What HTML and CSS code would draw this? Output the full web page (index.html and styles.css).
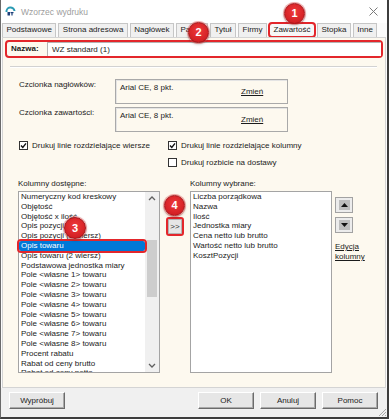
FILE: index.html
```html
<!DOCTYPE html>
<html lang="pl">
<head>
    <meta charset="UTF-8">
    <title>Wzorzec wydruku</title>
    <link rel="stylesheet" href="styles.css">
</head>
<body>
    <div class="window">
        <div class="titlebar">
            <svg class="app-icon" width="11" height="11" viewBox="0 0 11 11">
                <path d="M1.5 6 A4 4 0 0 1 9.5 5" fill="none" stroke="#2b9bb3" stroke-width="2"/>
                <rect x="2.5" y="6" width="2.5" height="3.5" fill="#1d3f7a"/>
                <rect x="5.5" y="6" width="3" height="1.2" fill="#1d3f7a"/>
                <rect x="6.4" y="6" width="1.2" height="3.5" fill="#1d3f7a"/>
            </svg>
            <span class="title">Wzorzec wydruku</span>
            <svg class="close" width="9" height="9" viewBox="0 0 9 9">
                <path d="M0.5 0.5 L8.5 8.5 M8.5 0.5 L0.5 8.5" stroke="#7a7a7a" stroke-width="1"/>
            </svg>
        </div>

        <div class="tabs">
            <span class="tab">Podstawowe</span>
            <span class="tab">Strona adresowa</span>
            <span class="tab">Nagłówek</span>
            <span class="tab">Papier</span>
            <span class="tab">Tytuł</span>
            <span class="tab">Firmy</span>
            <span class="tab active">Zawartość</span>
            <span class="tab">Stopka</span>
            <span class="tab">Inne</span>
        </div>

        <div class="page">
            <div class="name-row">
                <span class="name-label">Nazwa:</span>
                <div class="name-input">WZ standard (1)</div>
            </div>
            <div class="sep"></div>

            <div class="font-row">
                <span class="font-label">Czcionka nagłówków:</span>
                <div class="font-box">
                    <span class="font-name">Arial CE, 8 pkt.</span>
                    <a class="link change">Zmień</a>
                </div>
            </div>
            <div class="font-row second">
                <span class="font-label">Czcionka zawartości:</span>
                <div class="font-box">
                    <span class="font-name">Arial CE, 8 pkt.</span>
                    <a class="link change">Zmień</a>
                </div>
            </div>

            <div class="checks">
                <label class="check"><span class="box checked"><svg width="7" height="7" viewBox="0 0 7 7"><path d="M1 3.5 L2.8 5.4 L6 1.4" fill="none" stroke="#111" stroke-width="1.4"/></svg></span>Drukuj linie rozdzielające wiersze</label>
                <label class="check"><span class="box checked"><svg width="7" height="7" viewBox="0 0 7 7"><path d="M1 3.5 L2.8 5.4 L6 1.4" fill="none" stroke="#111" stroke-width="1.4"/></svg></span>Drukuj linie rozdzielające kolumny</label>
                <span></span>
                <label class="check"><span class="box"></span>Drukuj rozbicie na dostawy</label>
            </div>

            <div class="lists">
                <span class="list-label">Kolumny dostępne:</span>
                <span></span>
                <span class="list-label">Kolumny wybrane:</span>
                <span></span>

                <div class="list avail">
                    <div class="items">
                        <div class="item">Numeryczny kod kreskowy</div>
                        <div class="item">Objętość</div>
                        <div class="item">Objętość x ilość</div>
                        <div class="item">Opis pozycji</div>
                        <div class="item">Opis pozycji (2 wiersz)</div>
                        <div class="item selected">Opis towaru</div>
                        <div class="item">Opis towaru (2 wiersz)</div>
                        <div class="item">Podstawowa jednostka miary</div>
                        <div class="item">Pole &lt;własne 1&gt; towaru</div>
                        <div class="item">Pole &lt;własne 2&gt; towaru</div>
                        <div class="item">Pole &lt;własne 3&gt; towaru</div>
                        <div class="item">Pole &lt;własne 4&gt; towaru</div>
                        <div class="item">Pole &lt;własne 5&gt; towaru</div>
                        <div class="item">Pole &lt;własne 6&gt; towaru</div>
                        <div class="item">Pole &lt;własne 7&gt; towaru</div>
                        <div class="item">Pole &lt;własne 8&gt; towaru</div>
                        <div class="item">Procent rabatu</div>
                        <div class="item">Rabat od ceny brutto</div>
                        <div class="item cut">Rabat od ceny netto</div>
                    </div>
                    <div class="scrollbar">
                        <svg class="sb-arrow" width="14" height="14" viewBox="0 0 14 14"><path d="M4 8 L7 5 L10 8" fill="none" stroke="#606060" stroke-width="1.3"/></svg>
                        <div class="thumb"></div>
                        <svg class="sb-arrow down" width="14" height="14" viewBox="0 0 14 14"><path d="M4 6 L7 9 L10 6" fill="none" stroke="#606060" stroke-width="1.3"/></svg>
                    </div>
                </div>

                <div class="middle">
                    <button class="add-btn">&gt;&gt;</button>
                </div>

                <div class="list chosen">
                    <div class="item">Liczba porządkowa</div>
                    <div class="item">Nazwa</div>
                    <div class="item">Ilość</div>
                    <div class="item">Jednostka miary</div>
                    <div class="item">Cena netto lub brutto</div>
                    <div class="item">Wartość netto lub brutto</div>
                    <div class="item">KosztPozycji</div>
                </div>

                <div class="side">
                    <button class="move-btn"><span class="move-face"><svg width="7" height="4" viewBox="0 0 7 4"><path d="M0 4 L3.5 0 L7 4 Z" fill="#111"/></svg></span></button>
                    <button class="move-btn down"><span class="move-face"><svg width="7" height="4" viewBox="0 0 7 4"><path d="M0 0 L3.5 4 L7 0 Z" fill="#111"/></svg></span></button>
                    <a class="link edit">Edycja<br>kolumny</a>
                </div>
            </div>
        </div>

        <div class="footer">
            <button class="btn">Wypróbuj</button>
            <button class="btn ok">OK</button>
            <button class="btn">Anuluj</button>
            <button class="btn">Pomoc</button>
            <svg class="grip" width="9" height="9" viewBox="0 0 9 9">
                <path d="M8 1 L1 8 M8 4 L4 8 M8 7 L7 8" stroke="#a8a8a8" stroke-width="1"/>
            </svg>
        </div>

        <span class="badge b1">1</span>
        <span class="badge b2">2</span>
        <span class="badge b3">3</span>
        <span class="badge b4">4</span>
    </div>
</body>
</html>
```

FILE: styles.css
```css
* {
    box-sizing: border-box;
}

body {
    margin: 0;
    font-family: "Liberation Sans", Arial, sans-serif;
    font-size: 8px;
    line-height: 10px;
    color: #1b1b1b;
    background: #ffffff;
}

.window {
    position: relative;
    width: 389px;
    height: 419px;
    background: #fbfbfb;
    border-left: 1px solid #6a6a6a;
    border-right: 2px solid #3d3d3d;
    border-bottom: 2px solid #3d3d3d;
    display: flex;
    flex-direction: column;
}

/* title bar */
.titlebar {
    height: 23px;
    flex: none;
    display: flex;
    align-items: center;
    background: #ffffff;
}

.app-icon {
    margin-left: 4px;
}

.title {
    margin-left: 5px;
    font-size: 8.5px;
    color: #9d9d9d;
}

.close {
    margin-left: auto;
    margin-right: 9px;
}

/* tabs */
.tabs {
    height: 14px;
    flex: none;
    display: flex;
    gap: 2px;
    padding-left: 1px;
}

.tab {
    height: 14px;
    padding: 0 3.5px;
    line-height: 12px;
    border: 1px solid #c6c6c6;
    border-bottom: none;
    background: #f0f0f0;
    white-space: nowrap;
}

.tab.active {
    outline: 2px solid #e3262b;
    outline-offset: -1px;
    border-radius: 3px;
    background: #f7f7f7;
}

/* page */
.page {
    height: 351px;
    flex: none;
    margin: 0 1px;
    border: 1px solid #d4d4d4;
    background: #fdf9ef;
}

.name-row {
    margin: 2px 2px 0 2px;
    height: 18px;
    border: 2px solid #e3262b;
    border-radius: 4px;
    display: flex;
    align-items: center;
    padding-left: 4px;
}

.name-label {
    font-weight: bold;
    width: 36px;
}

.name-input {
    flex: 1;
    height: 14px;
    background: #ffffff;
    border-left: 1px solid #b4b4b4;
    border-top: 1px solid #b4b4b4;
    padding-left: 4px;
    line-height: 13px;
}

.sep {
    margin: 8px 8px 0 7px;
    height: 2px;
    border-top: 1px solid #d2d2d2;
    border-bottom: 1px solid #ffffff;
}

.font-row {
    display: flex;
    margin: 11px 0 0 16px;
    height: 25px;
}

.font-row.second {
    margin-top: 3px;
}

.font-label {
    width: 96px;
    padding-top: 1px;
}

.font-box {
    width: 173px;
    height: 25px;
    border: 1px solid #a9a9a9;
    box-shadow: inset 1px 1px #e4e4e4;
    display: flex;
    padding: 3px 0 0 4px;
}

.font-name {
    width: 121px;
}

.link {
    text-decoration: underline;
    color: #1b1b1b;
}

.change {
    margin-top: 4px;
}

/* checkboxes */
.checks {
    display: grid;
    grid-template-columns: 149px auto;
    grid-auto-rows: 17px;
    margin: 5px 0 0 16px;
}

.check {
    display: flex;
    align-items: center;
    gap: 4px;
    white-space: nowrap;
}

.box {
    width: 9px;
    height: 9px;
    border: 1px solid #333333;
    background: #ffffff;
    display: flex;
    align-items: center;
    justify-content: center;
}

/* column lists */
.lists {
    display: grid;
    grid-template-columns: 142px 30px 142px auto;
    grid-template-rows: 12px 182px;
    margin: 8px 0 0 15px;
}

.list-label {
    white-space: nowrap;
}

.list {
    border: 1px solid #a4a4a4;
    background: #ffffff;
}

.list .item {
    height: 9.8px;
    line-height: 9.8px;
    padding-left: 2px;
    white-space: nowrap;
}

.list .item.cut {
    height: 3.6px;
    overflow: hidden;
}

.avail {
    display: flex;
}

.avail .items {
    flex: 1;
}

.item.selected {
    background: #0078d7;
    color: #ffffff;
    outline: 2px solid #e3262b;
    border-radius: 2px;
    position: relative;
}

.scrollbar {
    width: 14px;
    background: #f0f0f0;
    display: flex;
    flex-direction: column;
}

.thumb {
    margin: 34px 2px 0 2px;
    height: 57px;
    background: #cdcdcd;
}

.sb-arrow.down {
    margin-top: auto;
}

.middle {
    padding: 26px 0 0 6px;
}

.add-btn {
    width: 18px;
    height: 19px;
    padding: 0;
    border: 2px solid #e3262b;
    border-radius: 3px;
    background: #e6e6e6;
    box-shadow: inset 0 0 0 1px #b3b3b3;
    font-family: "Liberation Sans", Arial, sans-serif;
    font-size: 8px;
    color: #333333;
}

.side {
    padding: 6px 0 0 3px;
    display: flex;
    flex-direction: column;
    align-items: flex-start;
}

.move-btn {
    width: 18px;
    height: 16px;
    padding: 0;
    border: 1px solid #a2a2a2;
    background: #ececec;
    display: flex;
    align-items: center;
    justify-content: center;
}

.move-btn.down {
    margin-top: 4px;
}

.move-face {
    width: 11px;
    height: 10px;
    background: #bdbdbd;
    display: flex;
    align-items: center;
    justify-content: center;
}

.edit {
    margin-top: 9px;
}

/* footer */
.footer {
    position: relative;
    height: 29px;
    flex: none;
    background: #f0f0f0;
    display: flex;
    align-items: flex-start;
    gap: 6px;
    padding: 4px 9px 0 8px;
}

.btn {
    width: 56px;
    height: 17px;
    padding: 0;
    border: 1px solid;
    border-color: #ffffff #6b6b6b #6b6b6b #ffffff;
    box-shadow: inset -1px -1px #a9a9a9;
    background: #e6e6e6;
    font-family: "Liberation Sans", Arial, sans-serif;
    font-size: 8px;
    color: #1b1b1b;
}

.btn.ok {
    margin-left: auto;
}

.grip {
    position: absolute;
    right: 0;
    bottom: 0;
}

/* numbered markers */
.badge {
    position: absolute;
    width: 21px;
    height: 21px;
    border-radius: 50%;
    background: radial-gradient(circle at 50% 40%, #ef3a3a, #c8161c);
    border: 1px solid #a51418;
    box-shadow: 0 0 0 1px rgba(235, 80, 80, 0.45), 0 1px 3px rgba(0, 0, 0, 0.35);
    color: #ffffff;
    font-weight: bold;
    font-size: 11px;
    line-height: 19px;
    text-align: center;
}

.b1 { left: 283px; top: 3px; }
.b2 { left: 187px; top: 22px; }
.b3 { left: 63px; top: 217px; width: 22px; height: 22px; line-height: 20px; }
.b4 { left: 163px; top: 195px; }
```
